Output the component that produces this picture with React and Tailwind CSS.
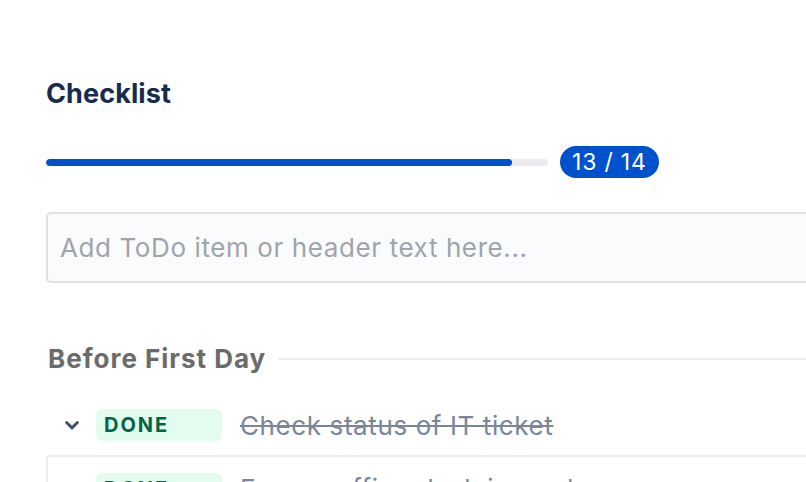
import React from 'react';

const Chevron = () => (
  <svg width="20" height="20" viewBox="0 0 24 24" className="text-[#42526e]">
    <path d="M5.5 9l6.5 6.5L18.5 9" fill="none" stroke="currentColor" strokeWidth="3.6" strokeLinecap="round" strokeLinejoin="round" />
  </svg>
);

const DoneBadge = () => (
  <div className="w-[126px] h-8 rounded-md bg-[#e3fcef] text-[#006644] font-bold text-[20px] leading-8 pl-2 tracking-[2px]">
    DONE
  </div>
);

const App = () => {
  const done = 13;
  const total = 14;
  return (
    <div className="w-[806px] h-[482px] overflow-hidden bg-white font-['Inter','Liberation_Sans',sans-serif]">
      <div className="w-[900px] pl-[46px] pt-[74px]">
        <h2 className="text-[27px] leading-[40px] font-bold text-[#172b4d] tracking-[0.1px]">Checklist</h2>

        {/* progress */}
        <div className="flex items-center mt-[32px] h-8">
          <div className="w-[502px] h-[7px] rounded-full bg-[#ebecf0] overflow-hidden">
            <div className="h-full rounded-full bg-[#0052cc]" style={{ width: `${(done / total) * 100}%` }} />
          </div>
          <div className="ml-3 h-8 px-3 rounded-full bg-[#0052cc] text-white text-[23px] leading-8 tracking-[0.8px]">
            {done} / {total}
          </div>
        </div>

        {/* input */}
        <div className="mt-[34px] h-[71px] w-[820px] rounded-[5px] border-2 border-[#dfe1e6] bg-[#fafbfc] flex items-center pl-[12px]">
          <span className="text-[26px] text-[#a0a4ab] tracking-[0.6px]">Add ToDo item or header text here...</span>
        </div>

        {/* section */}
        <div className="mt-[56px] flex items-center pl-[2px]">
          <span className="text-[26px] font-bold text-[#6b6b6b] tracking-[1px]">Before First Day</span>
          <div className="flex-1 h-[2px] bg-[#ebecf0] ml-3" />
        </div>

        <div className="mt-[31px] flex items-center h-8">
          <div className="w-[50px] flex justify-center pl-[2px]">
            <Chevron />
          </div>
          <DoneBadge />
          <span className="ml-[18px] text-[26px] text-[#7a869a] line-through tracking-[0.6px]">Check status of IT ticket</span>
        </div>

        <div className="mt-[14px] border-2 border-[#ebecf0] rounded-sm h-[60px] flex items-start pt-[16px]">
          <div className="w-[48px]" />
          <DoneBadge />
          <span className="ml-[18px] text-[26px] leading-8 text-[#7a869a] tracking-[0.6px]">Ensure office desk is ready</span>
        </div>
      </div>
    </div>
  );
};

export default App;
